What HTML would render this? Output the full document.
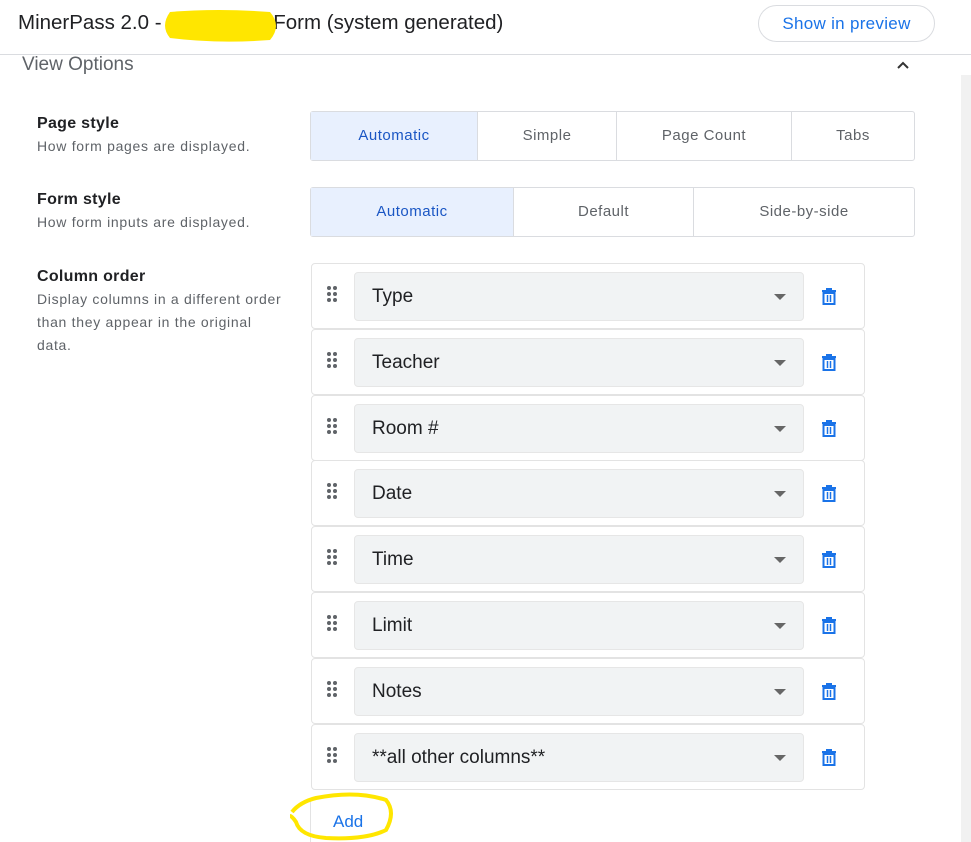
<!DOCTYPE html>
<html><head><style>
body{margin:0;width:971px;height:842px;overflow:hidden;background:#fff;font-family:"Liberation Sans",Roboto,sans-serif;position:relative}
.a{position:absolute}
.hdr{left:18px;top:11px;font-size:20.5px;color:#202124;white-space:nowrap}
.btn{left:758px;top:5px;width:177px;height:37px;border:1px solid #dadce0;border-radius:19px;box-sizing:border-box;color:#1a73e8;font-size:17px;text-align:center;line-height:36px;letter-spacing:0.3px}
.line{left:0;top:54px;width:971px;height:1px;background:#dadce0}
.lbl{left:37px;font-size:16px;font-weight:bold;color:#202124;letter-spacing:0.3px}
.sub{left:37px;font-size:14px;color:#5f6368;line-height:23px;letter-spacing:0.7px}
.seg{display:flex;position:absolute;border:1px solid #dadce0;border-radius:3px;box-sizing:border-box;height:50px}
.seg div{border-right:1px solid #dadce0;text-align:center;line-height:48px;font-size:15px;color:#5f6368;box-sizing:border-box;letter-spacing:0.5px}
.seg div:last-child{border-right:none}
.seg .on{background:#e8f0fe;color:#1a56c4}
.row{position:absolute;left:311px;width:554px;height:66px;border:1px solid #e3e3e3;border-radius:4px;box-sizing:border-box}
.sel{position:absolute;left:42px;top:8px;width:450px;height:49px;background:#f1f3f4;border:1px solid #e6e6e6;border-radius:4px;box-sizing:border-box;font-size:19px;color:#202124;line-height:47px;padding-left:17px}
.sel:after{content:"";position:absolute;right:17px;top:21px;border-left:6px solid transparent;border-right:6px solid transparent;border-top:6px solid #666}
.dots{position:absolute;left:14px;top:21px}
.tr{position:absolute;left:509px;top:23px}
</style></head><body>
<div class="a hdr">MinerPass 2.0 - <span style="display:inline-block;width:106px"></span>Form (system generated)</div>
<svg class="a" style="left:158px;top:6px" width="124" height="38"><path d="M12 6 Q60 2 112 6 Q124 20 112 34 Q60 38 12 32 Q2 20 12 6Z" fill="#ffe600"/></svg>
<div class="a btn">Show in preview</div>
<div class="a line"></div>
<div class="a" style="left:22px;top:54px;font-size:19px;color:#5f6368">View Options</div>
<svg class="a" style="left:896px;top:60px" width="14" height="10"><path d="M2 8 L7 3 L12 8" stroke="#333" stroke-width="2" fill="none"/></svg>
<div class="a" style="left:961px;top:75px;width:10px;height:767px;background:#f1f1f1"></div>
<div class="a lbl" style="top:115px">Page style</div>
<div class="a sub" style="top:135px">How form pages are displayed.</div>
<div class="seg" style="left:310px;top:111px;width:605px"><div class="on" style="width:167px">Automatic</div><div style="width:139px">Simple</div><div style="width:175px">Page Count</div><div style="flex:1">Tabs</div></div>
<div class="a lbl" style="top:191px">Form style</div>
<div class="a sub" style="top:211px">How form inputs are displayed.</div>
<div class="seg" style="left:310px;top:187px;width:605px"><div class="on" style="width:203px">Automatic</div><div style="width:180px">Default</div><div style="flex:1">Side-by-side</div></div>
<div class="a lbl" style="top:268px">Column order</div>
<div class="a sub" style="top:288px;width:250px">Display columns in a different order than they appear in the original data.</div>
<div id="rows"></div>
<div class="a" style="left:310px;top:801px;width:1px;height:41px;background:#e3e3e3"></div>
<div class="a" style="left:333px;top:812px;font-size:17px;color:#1a73e8">Add</div>
<svg class="a" style="left:286px;top:790px" width="112" height="52"><path d="M6 22 Q14 12 30 8 Q70 0 100 10 Q110 22 100 40 Q80 50 40 48 Q14 46 10 32 Q6 26 4 26" stroke="#ffe600" stroke-width="4" fill="none"/></svg>
<script>
var n=["Type","Teacher","Room #","Date","Time","Limit","Notes","**all other columns**"],h="";
var d='<svg class="dots" width="12" height="18">'+[0,6,12].map(y=>'<circle cx="3" cy="'+(y+3)+'" r="2" fill="#5f6368"/><circle cx="9" cy="'+(y+3)+'" r="2" fill="#5f6368"/>').join('')+'</svg>';
var t='<svg class="tr" width="16" height="18" viewBox="0 0 16 18"><path d="M5 1h6v2h4v2H1V3h4z" fill="#1a73e8"/><path d="M2.5 6h11v11h-11z" fill="none" stroke="#1a73e8" stroke-width="2"/><path d="M6.5 8v7M9.5 8v7" stroke="#1a73e8" stroke-width="1.5"/></svg>';
n.forEach((s,i)=>{h+='<div class="row" style="top:'+(263+i*65.8)+'px">'+d+'<div class="sel">'+s+'</div>'+t+'</div>'});
document.getElementById("rows").innerHTML=h;
</script>
</body></html>
